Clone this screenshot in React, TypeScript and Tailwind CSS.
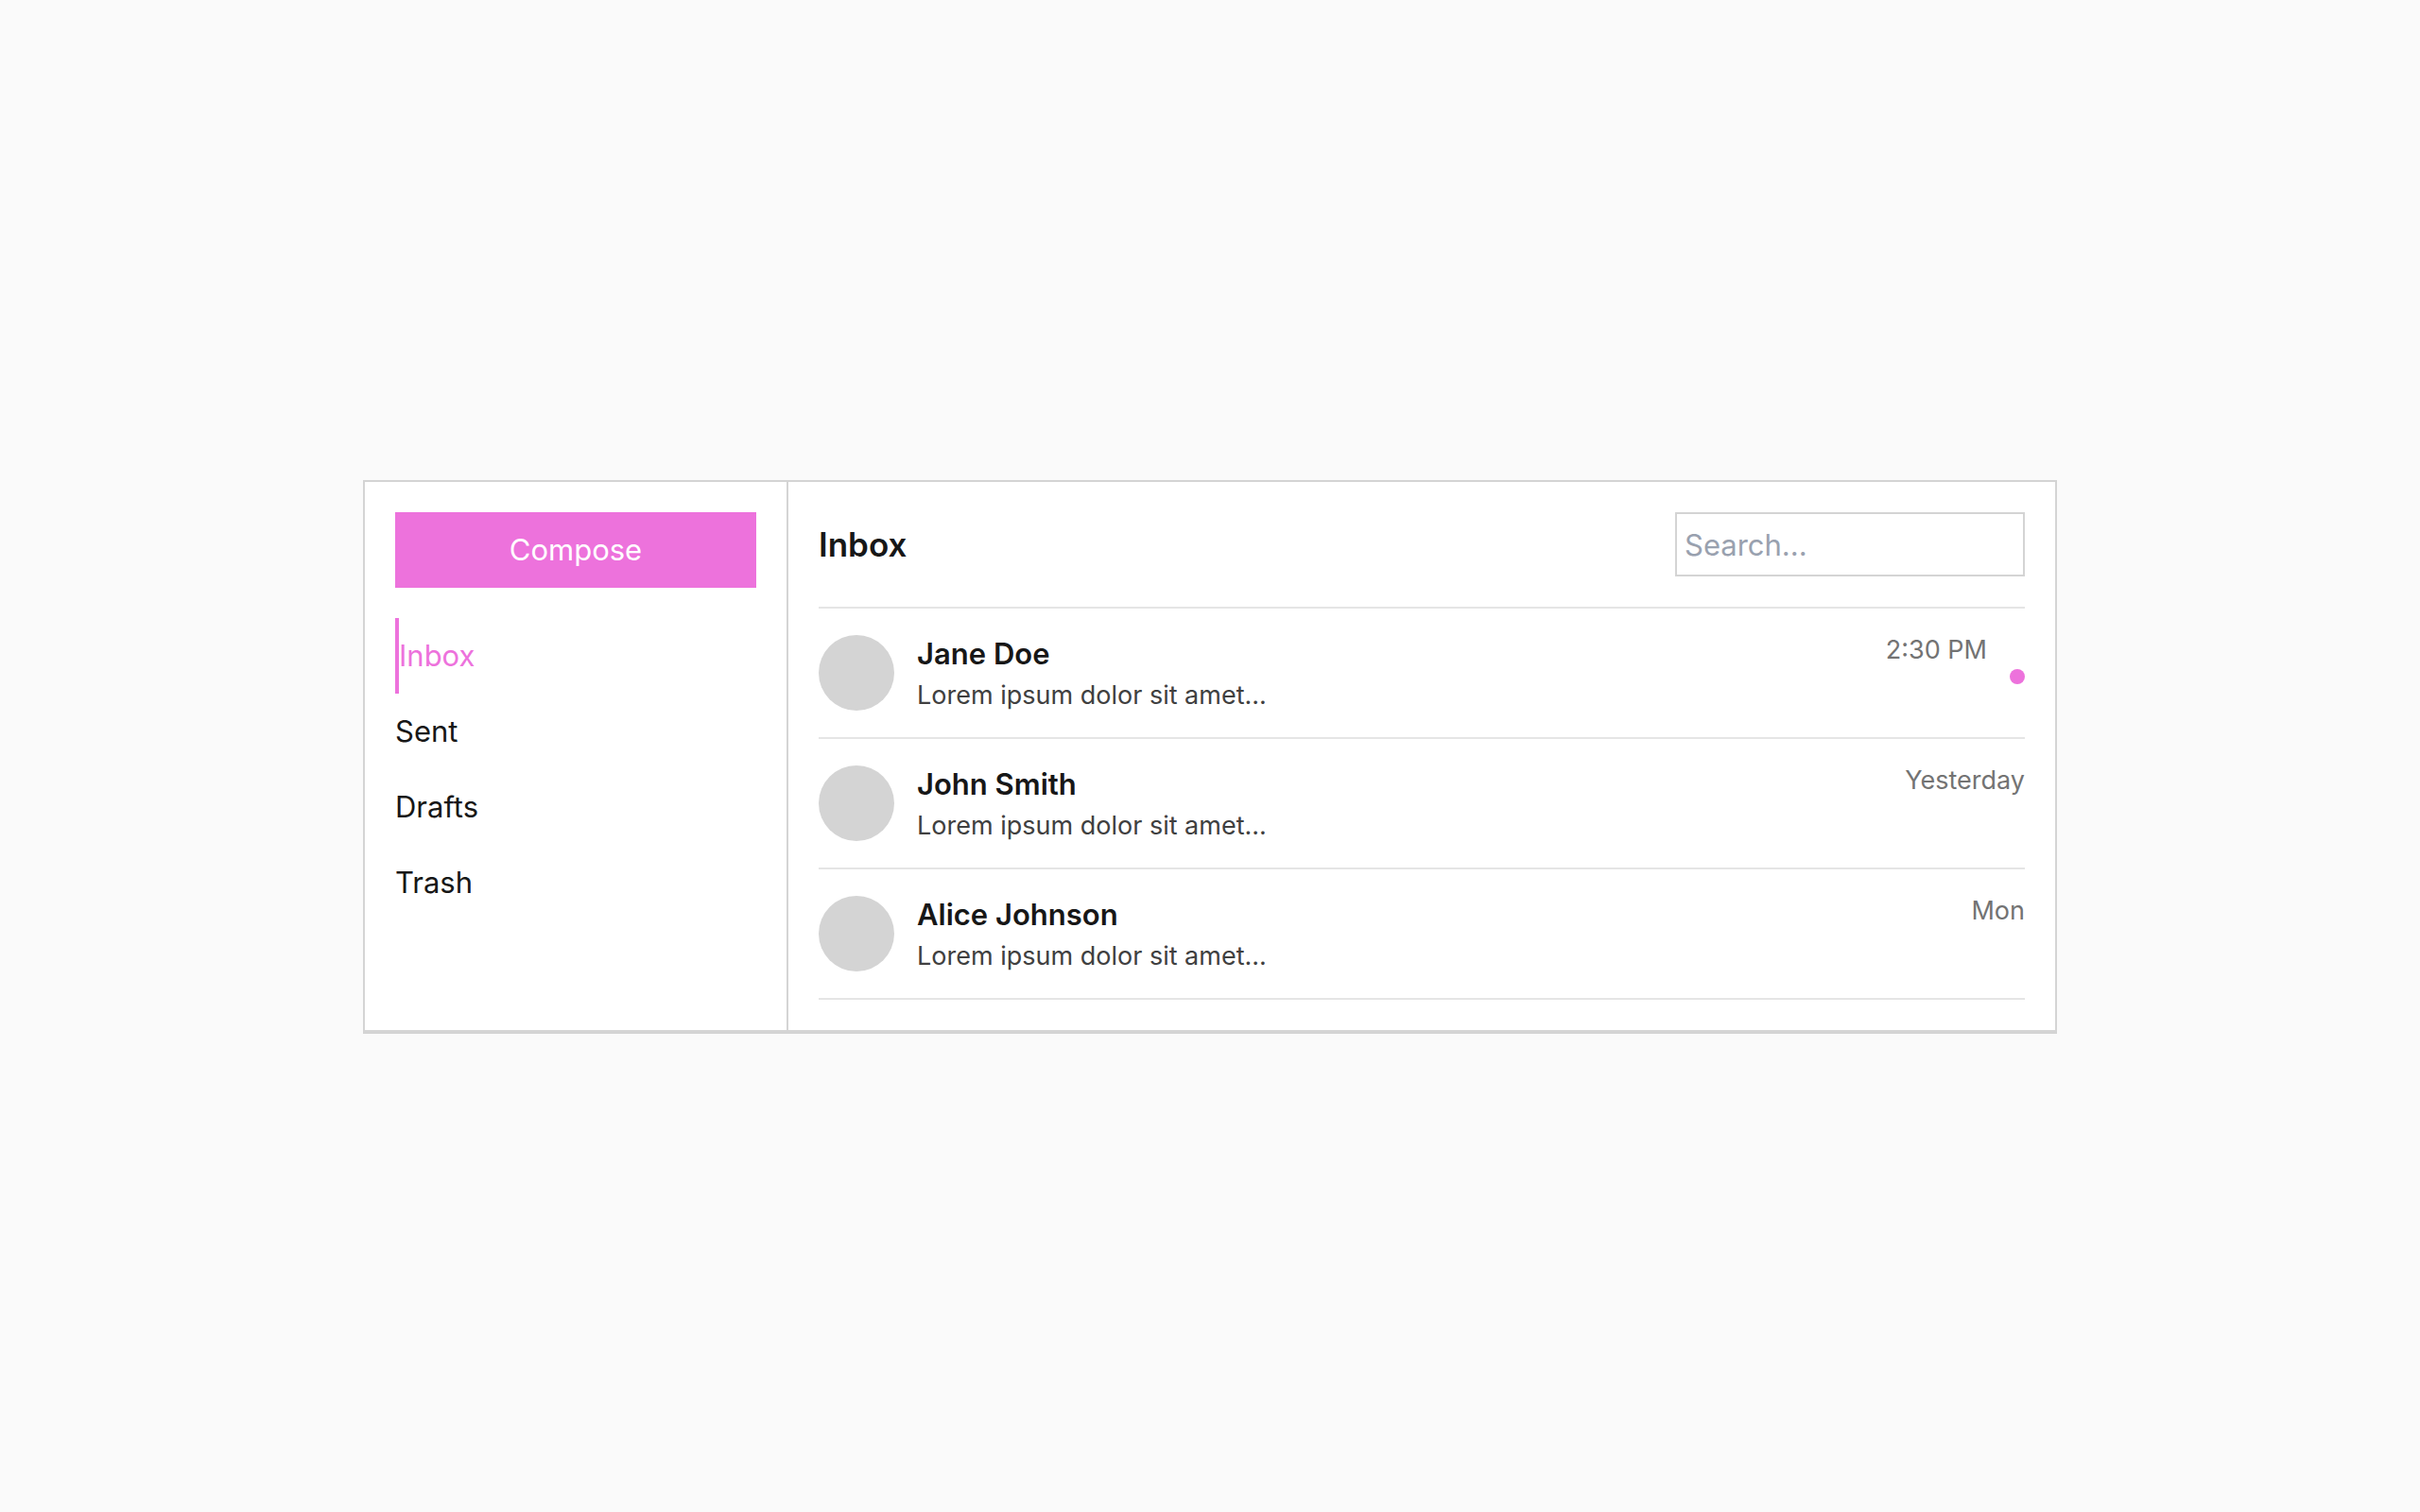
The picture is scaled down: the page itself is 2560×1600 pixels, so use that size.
import { useState } from "react";

const FOLDERS = ["Inbox", "Sent", "Drafts", "Trash"];

const MESSAGES = [
  { from: "Jane Doe", preview: "Lorem ipsum dolor sit amet...", time: "2:30 PM", unread: true },
  { from: "John Smith", preview: "Lorem ipsum dolor sit amet...", time: "Yesterday", unread: false },
  { from: "Alice Johnson", preview: "Lorem ipsum dolor sit amet...", time: "Mon", unread: false },
];

export default function App() {
  const [folder, setFolder] = useState("Inbox");
  const [q, setQ] = useState("");

  const messages = MESSAGES.filter((m) => m.from.toLowerCase().includes(q.trim().toLowerCase()));

  return (
    <main className="flex min-h-screen items-center justify-center bg-neutral-50 font-['Inter',sans-serif] text-[31px] leading-[48px] text-neutral-900">
      <div className="flex w-[70%] border-2 border-neutral-300 bg-white shadow-[0_2px_0_#d4d4d4]">
        {/* Sidebar */}
        <aside className="w-112 shrink-0 border-r-2 border-neutral-300 p-8">
          <button className="block w-full bg-[#ed72dc] py-4 text-center text-white">Compose</button>
          <nav className="mt-8">
            {FOLDERS.map((f) => (
              <a
                key={f}
                href={`#${f.toLowerCase()}`}
                onClick={() => setFolder(f)}
                className={`block py-4 ${f === folder ? "border-l-4 border-[#ed72dc] text-[#ed72dc]" : ""}`}
              >
                {f}
              </a>
            ))}
          </nav>
        </aside>

        {/* Message list */}
        <section className="min-w-0 flex-1 p-8">
          <header className="flex items-center justify-between border-b-2 border-neutral-200 pb-8">
            <h1 className="text-[35px] font-semibold">{folder}</h1>
            <input
              type="search"
              aria-label="Search"
              placeholder="Search..."
              value={q}
              onChange={(e) => setQ(e.target.value)}
              className="h-17 w-[370px] border-2 border-neutral-300 px-2 outline-none placeholder:text-gray-400"
            />
          </header>
          <ul>
            {messages.map((m) => (
              <li key={m.from} className="flex items-start gap-6 border-b-2 border-neutral-200 py-6">
                <span className="size-20 shrink-0 self-center rounded-full bg-neutral-300" />
                <div className="min-w-0 flex-1">
                  <h2 className="truncate font-semibold">{m.from}</h2>
                  <p className="truncate text-[27px] leading-[40px] text-neutral-700">{m.preview}</p>
                </div>
                <time className="text-[27px] leading-[40px] text-neutral-500">{m.time}</time>
                {m.unread && <span className="mt-10 size-4 shrink-0 rounded-full bg-[#ed72dc]" />}
              </li>
            ))}
          </ul>
        </section>
      </div>
    </main>
  );
}
